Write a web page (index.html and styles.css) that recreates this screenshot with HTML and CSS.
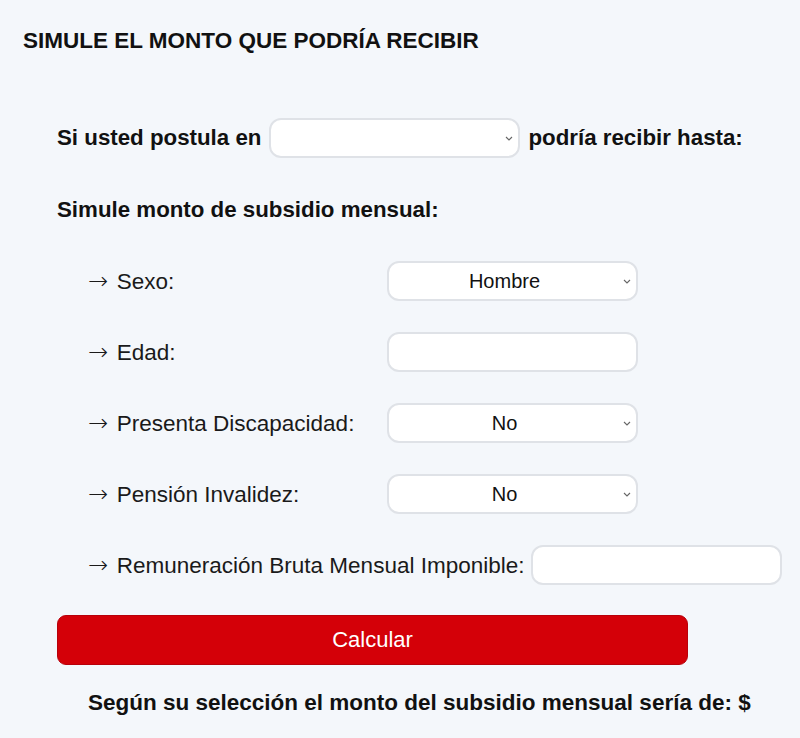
FILE: index.html
```html
<!DOCTYPE html>
<html lang="es">
<head>
<meta charset="utf-8">
<title>Simulador</title>
<link rel="stylesheet" href="styles.css">
</head>
<body>
<main class="page">
  <h1 class="title">SIMULE EL MONTO QUE PODRÍA RECIBIR</h1>
  <div class="row-main">
    <span class="strong">Si usted postula en</span>
    <span class="sel-wrap">
      <select class="field"><option></option></select>
      <svg class="chev" viewBox="0 0 8 5" width="8" height="5"><path d="M1 1l3 3 3-3" fill="none" stroke="#666" stroke-width="1.1"/></svg>
    </span>
    <span class="strong">podría recibir hasta:</span>
  </div>
  <p class="strong subtitle">Simule monto de subsidio mensual:</p>
  <div class="form">
    <div class="frow">
      <span class="label"><span class="arrow">→</span> Sexo:</span>
      <span class="sel-wrap">
        <select class="field"><option>Hombre</option></select>
        <svg class="chev" viewBox="0 0 8 5" width="8" height="5"><path d="M1 1l3 3 3-3" fill="none" stroke="#666" stroke-width="1.1"/></svg>
      </span>
    </div>
    <div class="frow">
      <span class="label"><span class="arrow">→</span> Edad:</span>
      <input class="field" type="text">
    </div>
    <div class="frow">
      <span class="label"><span class="arrow">→</span> Presenta Discapacidad:</span>
      <span class="sel-wrap">
        <select class="field"><option>No</option></select>
        <svg class="chev" viewBox="0 0 8 5" width="8" height="5"><path d="M1 1l3 3 3-3" fill="none" stroke="#666" stroke-width="1.1"/></svg>
      </span>
    </div>
    <div class="frow">
      <span class="label"><span class="arrow">→</span> Pensión Invalidez:</span>
      <span class="sel-wrap">
        <select class="field"><option>No</option></select>
        <svg class="chev" viewBox="0 0 8 5" width="8" height="5"><path d="M1 1l3 3 3-3" fill="none" stroke="#666" stroke-width="1.1"/></svg>
      </span>
    </div>
    <div class="frow">
      <span class="label label-auto"><span class="arrow">→</span> Remuneración Bruta Mensual Imponible:</span>
      <input class="field" type="text">
    </div>
  </div>
  <button class="btn" type="button">Calcular</button>
  <p class="strong result">Según su selección el monto del subsidio mensual sería de: $</p>
</main>
</body>
</html>
```

FILE: styles.css
```css
html, body {
  margin: 0;
  padding: 0;
  background: #f4f7fb;
}
body {
  font-family: "Liberation Sans", Arial, sans-serif;
  color: #111;
}
.page {
  padding: 29px 0 0 23px;
  display: flex;
  flex-direction: column;
  align-items: flex-start;
}
.title {
  margin: 0;
  font-size: 22.5px;
  line-height: 24px;
  font-weight: bold;
  color: #111;
}
.strong {
  font-weight: bold;
  font-size: 22.3px;
  line-height: 24px;
}
.row-main {
  margin: 65px 0 0 34px;
  display: flex;
  align-items: center;
  gap: 8px;
  height: 40px;
}
.subtitle {
  margin: 40px 0 0 34px;
}
.form {
  margin: 39px 0 0 65px;
  display: flex;
  flex-direction: column;
  gap: 31px;
}
.frow {
  display: flex;
  align-items: center;
  height: 40px;
}
.label {
  width: 299px;
  font-size: 22.5px;
  line-height: 24px;
  color: #1a1a1a;
}
.arrow {
  display: inline-block;
  width: 22.5px;
  font-family: "DejaVu Sans ExtraLight", "DejaVu Sans", sans-serif;
  font-weight: 200;
  font-size: 24px;
  line-height: 24px;
}
.label-auto {
  width: auto;
  margin-right: 7px;
}
.sel-wrap {
  position: relative;
  display: inline-block;
  height: 40px;
}
.field {
  box-sizing: border-box;
  width: 251px;
  height: 40px;
  border: 2px solid #dfe2e7;
  border-radius: 12px;
  background: #fff;
  font-family: "Liberation Sans", Arial, sans-serif;
  font-size: 20px;
  color: #111;
  padding: 0 34px 0 18px;
  outline: none;
  margin: 0;
}
select.field {
  -webkit-appearance: none;
  appearance: none;
  text-align: center;
  text-align-last: center;
}
.chev {
  position: absolute;
  right: 7px;
  top: 18px;
  pointer-events: none;
}
.btn {
  margin: 30px 0 0 34px;
  width: 631px;
  height: 50px;
  background: #d40008;
  border: 1px solid #b8000a;
  border-radius: 9px;
  color: #fff;
  font-family: "Liberation Sans", Arial, sans-serif;
  font-size: 22px;
  cursor: pointer;
}
.result {
  margin: 26px 0 0 65px;
  font-size: 22.5px;
}
```
